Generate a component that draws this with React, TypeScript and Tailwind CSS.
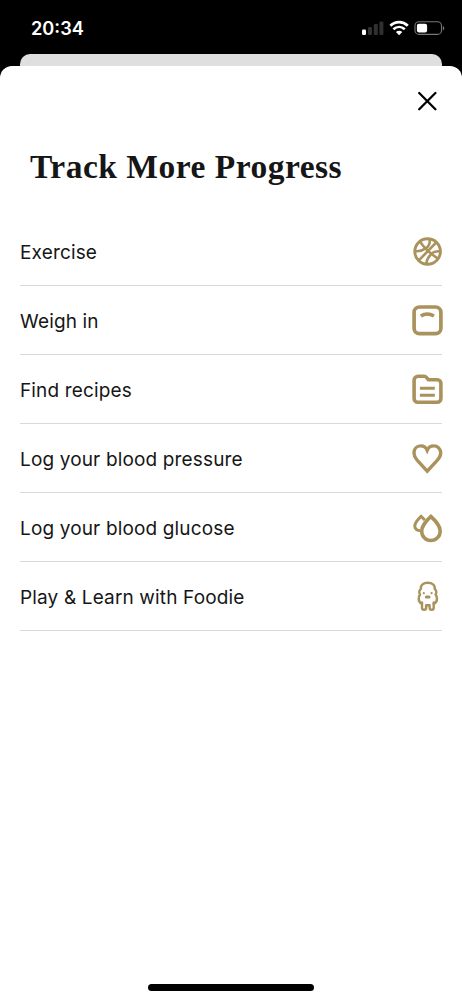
import type { ReactNode } from "react";

const Icon = ({ children }: { children: ReactNode }) => (
  <svg
    viewBox="0 0 30 30"
    className="w-[30px] h-[30px] shrink-0 overflow-visible text-[#aa925c]"
    fill="none"
    stroke="currentColor"
    strokeWidth="3"
  >
    {children}
  </svg>
);

const ExerciseIcon = () => (
  <Icon>
    <circle cx="15.6" cy="15.5" r="12.8" strokeWidth="2.9" />
    <g strokeWidth="2.6">
      <path d="M24.3 6.4 6.8 24.4" />
      <path d="M8 5.6C12.4 12.2 17.8 17.2 26 22.6" />
      <path d="M17.5 3C18.4 7.4 17 10.4 13.4 12.6 10 14.8 6.4 15.6 3 15.1" />
      <path d="M28.2 15.4C24 15 21 16 18.6 18.6 16.2 21.2 14.6 24 14.3 28" />
    </g>
  </Icon>
);

const WeighIcon = () => (
  <Icon>
    <rect x="2.1" y="2" width="26.8" height="26.7" rx="5.4" strokeWidth="3.7" />
    <path d="M8.8 11C12.8 8.4 17.8 8.4 22 11" strokeWidth="3.5" />
  </Icon>
);

const RecipesIcon = () => (
  <Icon>
    <path
      d="M6 2.3H12.2C13 2.3 13.7 2.6 14.2 3.2L16.4 5.7H25.3A3.6 3.6 0 0 1 28.9 9.3V24.6A3.7 3.7 0 0 1 25.2 28.3H5.9A3.8 3.8 0 0 1 2.1 24.5V6.2A3.9 3.9 0 0 1 6 2.3Z"
      strokeWidth="3.6"
    />
    <path d="M7.9 14.3H22.8M7.9 21.2H22.8" strokeWidth="3.1" />
  </Icon>
);

const HeartIcon = () => (
  <Icon>
    <path
      d="M15.2 28.2 5.1 17.2C2.9 14.7 2 12.8 2 10 2 5.8 4.8 2.9 8.6 2.9 11.6 2.9 14 4.5 15.2 7.2 16.4 4.5 18.8 2.9 21.8 2.9 25.6 2.9 28.7 5.8 28.7 10 28.7 12.8 27.6 14.7 25.4 17.2Z"
      strokeWidth="3.4"
    />
  </Icon>
);

const GlucoseIcon = () => (
  <Icon>
    <path
      d="M18.8 4.4C14.2 8.9 9.7 13.4 9.7 19.2 9.7 24.4 13.6 28.5 18.8 28.5 24 28.5 28.2 24.4 28.2 19.2 28.2 13.4 23.6 8.9 18.8 4.4Z"
      strokeWidth="3.5"
    />
    <path
      d="M12.8 8 9.1 4.3C5.8 7.4 2.8 10.5 2.8 13.9 2.8 16.4 4.8 18.3 8 18.8"
      strokeWidth="3"
    />
  </Icon>
);

const FoodieIcon = () => (
  <Icon>
    <g strokeWidth="2.4" strokeLinecap="round" strokeLinejoin="round">
      <path d="M10 22.8C7.9 22 6.7 20.2 6.7 17.8 6.7 16.2 7.1 14.8 8 13.5 7.2 12.4 7.1 11.4 7.3 10.4 7.5 9.3 8 8.6 8.9 7.9 8.3 4.1 11.5 1.8 15.8 1.8 20.1 1.8 23.3 4.1 22.7 7.9 23.8 8.8 24.3 9.8 24.3 11 24.3 12 24 12.9 23.6 13.5 24.6 14.8 25 16.2 25 17.8 25 20.2 23.8 22 21.7 22.8" />
      <path d="M10 21.5V26.8C10 29.5 14.1 29.5 14.1 26.8V24.2M17.6 24.2V26.8C17.6 29.5 21.7 29.5 21.7 26.8V21.5M14.1 24.2H17.6" />
    </g>
    <g fill="currentColor" stroke="none">
      <circle cx="11.8" cy="12.2" r="1.1" />
      <circle cx="19.6" cy="12.2" r="1.1" />
      <rect x="12.8" y="14.4" width="5.8" height="3.2" rx="1.6" />
    </g>
  </Icon>
);

const items = [
  { title: "Exercise", icon: <ExerciseIcon /> },
  { title: "Weigh in", icon: <WeighIcon /> },
  { title: "Find recipes", icon: <RecipesIcon /> },
  { title: "Log your blood pressure", icon: <HeartIcon /> },
  { title: "Log your blood glucose", icon: <GlucoseIcon /> },
  { title: "Play & Learn with Foodie", icon: <FoodieIcon /> },
];

const StatusBar = () => (
  <header className="flex h-[54px] items-start justify-between pl-[31px] pr-[17px] pt-[16px] text-white">
    <span className="font-['Inter',sans-serif] text-[18.2px] leading-6 font-semibold">
      20:34
    </span>
    <div className="flex h-6 items-center">
      <svg viewBox="0 0 84 18" className="h-[18px] w-[84px]" fill="none">
        <rect x="1" y="10.5" width="4" height="5.5" rx="1.2" fill="#fff" />
        <rect x="7" y="8" width="4" height="8" rx="1.2" fill="#303030" />
        <rect x="12.8" y="5" width="4" height="11" rx="1.2" fill="#303030" />
        <rect x="18.4" y="2.5" width="4" height="13.5" rx="1.2" fill="#303030" />
        <path d="M29.4 6.8C34.5 1.9 41.7 1.9 46.8 6.8" stroke="#fff" strokeWidth="2.8" />
        <path d="M32.4 10.3C35.8 7.2 40.4 7.2 43.8 10.3" stroke="#fff" strokeWidth="2.7" />
        <path d="M38.1 16.2 34.9 12.9C36.8 11.3 39.4 11.3 41.3 12.9Z" fill="#fff" />
        <rect x="54" y="2.8" width="26.5" height="12.6" rx="4" stroke="#777" strokeWidth="1.1" />
        <rect x="55.9" y="4.7" width="10.2" height="8.8" rx="2" fill="#fff" />
        <path d="M81.9 7V11.5C83.8 10.6 83.8 7.8 81.9 7Z" fill="#777" />
      </svg>
    </div>
  </header>
);

const App = () => {
  return (
    <div className="flex h-[1000px] w-[462px] flex-col overflow-hidden bg-black">
      <StatusBar />
      <div className="mx-5 h-3 shrink-0 rounded-t-[10px] bg-[#dfdfdf]" />
      <main className="flex flex-1 flex-col rounded-t-[12px] bg-white text-[#161616]">
        <div className="flex h-[69px] items-center justify-end pr-[25px]">
          <button aria-label="Close" className="size-5">
            <svg
              viewBox="0 0 20 20"
              className="size-5"
              stroke="#000"
              strokeWidth="2.3"
              strokeLinecap="round"
            >
              <path d="M2.2 2 18.4 18.2M18.4 2 2.2 18.2" />
            </svg>
          </button>
        </div>
        <h1 className="ml-[30px] mt-[12px] h-10 whitespace-nowrap font-['Liberation_Serif',serif] text-[33.5px] leading-10 font-bold tracking-[0.5px]">
          Track More Progress
        </h1>
        <ul className="mx-5 mt-[30px] flex flex-col">
          {items.map((item) => (
            <li
              key={item.title}
              className="flex h-[69px] items-center justify-between border-b border-[#d9d9d9]"
            >
              <span className="whitespace-nowrap pt-[3px] font-['Inter',sans-serif] text-[19px] leading-6 tracking-[0.15px]">
                {item.title}
              </span>
              {item.icon}
            </li>
          ))}
        </ul>
        <div className="mx-auto mb-[9px] mt-auto h-[7px] w-[166px] rounded-full bg-black" />
      </main>
    </div>
  );
};

export default App;
